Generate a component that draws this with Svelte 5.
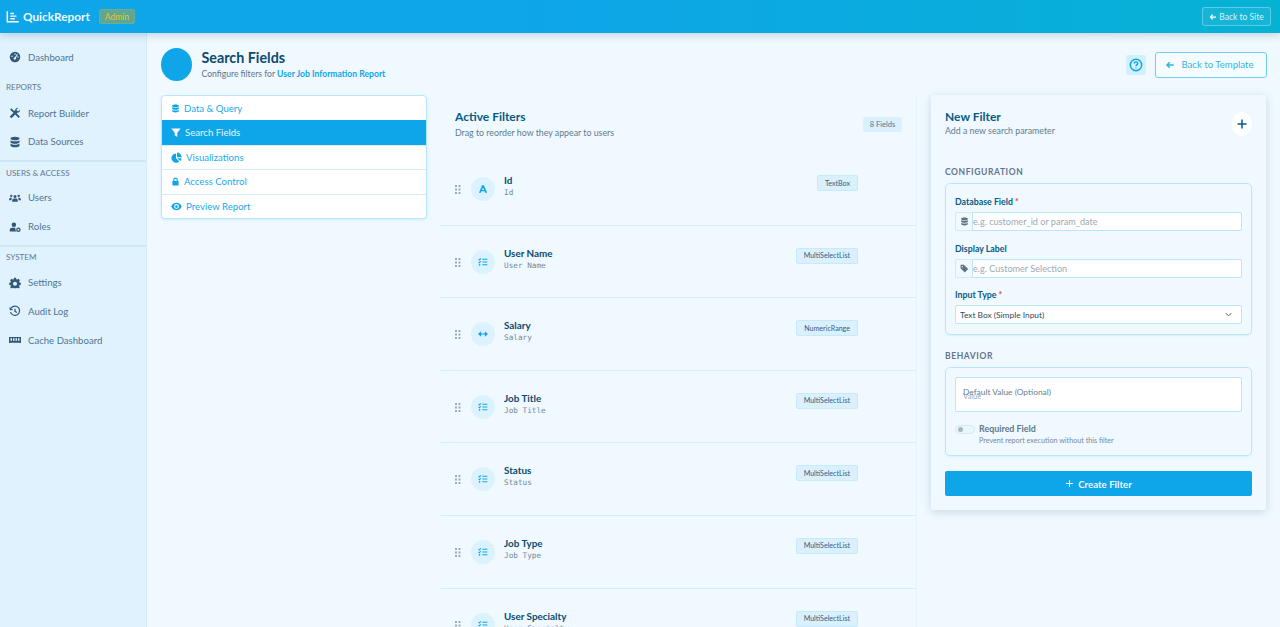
<script>
  const db = 'M8 1C4.5 1 2 2 2 3.4S4.5 5.8 8 5.8 14 4.8 14 3.4 11.500 1 8 1ZM2 5.500V7.900C2 9.300 4.500 10.300 8 10.300S14 9.300 14 7.900V5.500C12.800 6.600 10.500 7.100 8 7.100S3.200 6.600 2 5.500ZM2 10V12.500C2 13.900 4.500 15 8 15S14 13.900 14 12.500V10C12.800 11.100 10.500 11.700 8 11.700S3.200 11.100 2 10Z';
  const icons = {
    db,
    gauge: 'M8 1a7 7 0 1 0 0 14A7 7 0 0 0 8 1ZM8 3a1 1 0 1 1 0 2 1 1 0 0 1 0-2ZM4 6a1 1 0 1 1 0 2 1 1 0 0 1 0-2ZM11.800 4.700 9.300 9A1.700 1.700 0 1 1 7.900 8.200L10.500 4ZM12 7a1 1 0 1 1 0 2 1 1 0 0 1 0-2Z',
    tools: 'M1.500 3 3 1.500 7 5.300 8.500 4C8.300 2.500 9.800.8 12 1.200L10 3.200 10.500 5 12.500 5.500 14.600 3.500C15 6 13 7.700 11.500 7.300L10.300 8.500 14.500 12.700 12.700 14.500 8.300 10 3.300 15 1 12.700 6 7.800 2.600 4.600 1.500 3Z',
    users: 'M8 4a2 2 0 1 1 0 4 2 2 0 0 1 0-4ZM3 3.500a1.600 1.600 0 1 1 0 3.200 1.600 1.600 0 0 1 0-3.200ZM13 3.500a1.600 1.600 0 1 1 0 3.200 1.600 1.600 0 0 1 0-3.200ZM0 11C0 8.800.9 7.500 2.300 7.500H4.200C3.500 8.300 3.200 9.500 3.200 11ZM16 11C16 8.800 15.100 7.500 13.700 7.500H11.800C12.500 8.300 12.800 9.500 12.800 11ZM4.200 13C4.200 10 5 8.700 6.500 8.700H9.500C11 8.700 11.800 10 11.800 13Z',
    usercog: 'M6.500 2a3 3 0 1 1 0 6 3 3 0 0 1 0-6ZM1 14V12C1 10 2.500 9 4 9H8.500C8.300 11 8.800 13 10 14ZM12.500 8.500a3 3 0 1 1 0 6 3 3 0 0 1 0-6ZM12.500 10.300a1.200 1.200 0 1 0 0 2.400 1.200 1.200 0 0 0 0-2.400Z',
    cog: 'M6.700 1H9.300L9.700 2.900 11 3.400 12.700 2.400 14.500 4.300 13.500 6 14 7.300 15.800 7.700V10.200L14 10.700 13.500 12 14.500 13.600 12.700 15.300 11 14.400 9.700 14.900 9.300 15H6.700L6.300 14.900 5 14.400 3.300 15.300 1.500 13.600 2.500 12 2 10.700.2 10.200V7.700L2 7.300 2.500 6 1.500 4.300 3.300 2.400 5 3.400 6.300 2.900ZM8 6.200a2.700 2.700 0 1 0 0 5.400 2.700 2.700 0 0 0 0-5.400Z',
    tag: 'M1 2V7.500L8.500 15 14.500 9 7 1.500H1.500ZM4 3.500a1.200 1.200 0 1 1 0 2.400 1.200 1.200 0 0 1 0-2.400Z',
    mem: 'M0 4H16V9.500A1 1 0 0 0 16 10.500V12H0V10.500A1 1 0 0 0 0 9.500ZM2 5.500V9H4V5.500ZM5.300 5.500V9H7.300V5.500ZM8.700 5.500V9H10.700V5.500ZM12 5.500V9H14V5.500ZM2 10.500V11H14V10.500Z',
    filter: 'M.5 1.500H15.500L10 8.500V15L6 12.500V8.500Z',
    pie: 'M8.800 0.800A6.700 6.700 0 0 1 15.500 7.500H8.800ZM7.300 2.200V8.900L12 13.700A6.700 6.700 0 1 1 7.300 2.200ZM9.100 9H15.400A6.600 6.600 0 0 1 13.500 13.200Z',
    lock: 'M4 7V5A4 4 0 0 1 12 5V7H13.500V15H2.500V7ZM6 7H10V5A2 2 0 0 0 6 5Z',
    eye: 'M8 2.500C4.500 2.500 1.700 5 .3 8 1.700 11 4.500 13.500 8 13.500S14.300 11 15.700 8C14.300 5 11.500 2.500 8 2.500ZM8 4.500a3.500 3.500 0 1 1 0 7 3.500 3.500 0 0 1 0-7ZM8 6a2 2 0 1 0 0 4 2 2 0 0 0 0-4Z',
    a: 'M6.600 2H9.400L14.500 14H11.500L10.600 11.500H5.400L4.500 14H1.500ZM8 5.700 6.300 9.500H9.700Z'
  };
  const side = [
    { items: [['Dashboard', 'gauge']] },
    { title: 'REPORTS', items: [['Report Builder', 'tools'], ['Data Sources', 'db']] },
    { title: 'USERS & ACCESS', items: [['Users', 'users'], ['Roles', 'usercog']] },
    { title: 'SYSTEM', items: [['Settings', 'cog'], ['Audit Log', 'history'], ['Cache Dashboard', 'mem']] }
  ];
  const tabs = [
    ['Data & Query', 'db', 9], ['Search Fields', 'filter', 10], ['Visualizations', 'pie', 11], ['Access Control', 'lock', 9], ['Preview Report', 'eye', 11]
  ];
  const rows = [
    ['Id', 'TextBox', 'a'], ['User Name', 'MultiSelectList', 'list'], ['Salary', 'NumericRange', 'range'],
    ['Job Title', 'MultiSelectList', 'list'], ['Status', 'MultiSelectList', 'list'], ['Job Type', 'MultiSelectList', 'list'],
    ['User Specialty', 'MultiSelectList', 'list']
  ];
</script>

{#snippet icon(name, cls, w)}
  <svg class={cls} style={w ? `width:${w}px` : undefined} viewBox="0 0 16 16" aria-hidden="true">
    {#if name === 'list'}
      <path class="ln" d="M7 3.500H15M7 8H15M7 12.500H15" />
      <path class="ln thin" d="M1 3.500 2.300 4.800 4.500 2.300M1 8 2.300 9.300 4.500 6.800" />
      <circle cx="2.500" cy="12.500" r="1.400" />
    {:else if name === 'range'}
      <path class="ln" d="M4 8H12" />
      <path d="M0 8 5 3.500V12.500ZM16 8 11 3.500V12.500Z" />
    {:else if name === 'history'}
      <path class="ln" d="M3 3.800A6.200 6.200 0 1 1 2 9.500" />
      <path d="M.8 2.200 1 7 5.600 6.700Z" />
      <path class="ln thin" d="M8 5V8.500L10.500 10" />
    {:else}
      <path fill-rule="evenodd" d={icons[name]} />
    {/if}
  </svg>
{/snippet}

<div class="app">
  <header class="top">
    <div class="brand">
      <svg class="logo" viewBox="0 0 16 16" aria-hidden="true">
        <path d="M1.500 1.500V13.500H14.500" /><path d="M5 4H9M5 7H12M5 10H10" />
      </svg>
      <span class="name">QuickReport</span>
      <span class="admin">Admin</span>
    </div>
    <button class="site"><svg viewBox="0 0 16 16"><path d="M14 8H3M7.500 3.500 3 8 7.500 12.500" /></svg>Back to Site</button>
  </header>

  <div class="body">
    <aside class="side">
      {#each side as g, i}
        <section class="group" class:ruled={i > 1}>
          {#if g.title}<h4>{g.title}</h4>{/if}
          {#each g.items as it}
            <div class="link">{@render icon(it[1], 'sico')}<span>{it[0]}</span></div>
          {/each}
        </section>
      {/each}
    </aside>

    <main class="main">
      <div class="head">
        <div class="bubble"></div>
        <div class="htext">
          <h1>Search Fields</h1>
          <p>Configure filters for <b>User Job Information Report</b></p>
        </div>
        <div class="hactions">
          <span class="help">
            <svg viewBox="0 0 16 16"><circle cx="8" cy="8" r="6.500" /><path d="M6 6.300C6 3.800 10 3.800 10 6.300 10 7.800 8 7.800 8 9.300" /><path d="M8 11V12" /></svg>
          </span>
          <button class="tmpl"><svg viewBox="0 0 16 16"><path d="M14 8H3M7.500 3.500 3 8 7.500 12.500" /></svg>Back to Template</button>
        </div>
      </div>

      <div class="cols">
        <nav class="tabs">
          {#each tabs as t, i}
            <div class="tab" class:active={i === 1}>{@render icon(t[1], 'tico', t[2])}<span>{t[0]}</span></div>
          {/each}
        </nav>

        <section class="list">
          <div class="lhead">
            <div>
              <h2>Active Filters</h2>
              <p>Drag to reorder how they appear to users</p>
            </div>
            <span class="count">8 Fields</span>
          </div>
          {#each rows as r}
            <div class="row">
              <svg class="grip" viewBox="0 0 6 9"><path d="M0 0h2v2H0zM3.500 0h2v2h-2zM0 3.500h2v2H0zM3.500 3.500h2v2h-2zM0 7h2v2H0zM3.500 7h2v2h-2z" /></svg>
              <span class="ric">{@render icon(r[2], 'rico')}</span>
              <div class="rtext">
                <div class="rname">{r[0]}</div>
                <code>{r[0]}</code>
              </div>
              <span class="kind">{r[1]}</span>
            </div>
          {/each}
        </section>

        <aside class="panel">
          <div class="phead">
            <div>
              <h2>New Filter</h2>
              <p>Add a new search parameter</p>
            </div>
            <span class="plus"><svg viewBox="0 0 16 16"><path d="M8 2V14M2 8H14" /></svg></span>
          </div>

          <h5>CONFIGURATION</h5>
          <div class="box cfg">
            <label for="f1">Database Field <i>*</i></label>
            <div class="ig">
              <span class="addon">{@render icon('db', 'aico')}</span>
              <input id="f1" placeholder="e.g. customer_id or param_date" />
            </div>
            <label for="f2">Display Label</label>
            <div class="ig">
              <span class="addon">{@render icon('tag', 'aico')}</span>
              <input id="f2" placeholder="e.g. Customer Selection" />
            </div>
            <label for="f3">Input Type <i>*</i></label>
            <div class="sel" id="f3">
              <span>Text Box (Simple Input)</span>
              <svg viewBox="0 0 16 16"><path d="M3 5.500 8 10.500 13 5.500" /></svg>
            </div>
          </div>

          <h5 class="beh">BEHAVIOR</h5>
          <div class="box">
            <div class="float">
              <span class="ph">Value</span>
              <span class="fl">Default Value (Optional)</span>
            </div>
            <div class="req">
              <span class="sw"><span class="dot"></span></span>
              <div>
                <div class="rq">Required Field</div>
                <div class="rs">Prevent report execution without this filter</div>
              </div>
            </div>
          </div>

          <button class="create"><svg viewBox="0 0 16 16"><path d="M8 2V14M2 8H14" /></svg>Create Filter</button>
        </aside>
      </div>
    </main>
  </div>
</div>

<style>
  :global(body) { margin: 0; background: #f0f9ff; }
  * { box-sizing: border-box; }
  .app {
    width: 1280px; height: 627px; overflow: hidden; display: flex; flex-direction: column;
    font-family: Lato, "Open Sans", sans-serif; color: #0c4a6e; background: #f0f9ff;
  }
  h1, h2, h4, h5, p { margin: 0; }
  svg { display: block; flex: none; }

  .top {
    height: 33px; flex: none; display: flex; align-items: center; justify-content: space-between;
    padding: 0 9px 0 6px; background: linear-gradient(90deg, #0ea5e9 0%, #0ea5e9 40%, #06b2d4 100%);
    box-shadow: 0 2px 8px rgba(12, 74, 110, .22); position: relative; z-index: 2;
  }
  .brand { display: flex; align-items: center; }
  .logo { width: 14px; height: 14px; fill: none; stroke: #fff; stroke-width: 1.700; margin-right: 3px; }
  .name { color: #f0f9ff; font-size: 11.800px; font-weight: 700; }
  .admin {
    margin-left: 9px; width: 36px; height: 15px; display: flex; align-items: center; justify-content: center;
    font-size: 8.500px; color: #eec11a; background: rgba(120, 170, 120, .75); border: 1px solid #6fae8a; border-radius: 2px;
  }
  .site {
    width: 69px; height: 19px; padding: 0; display: flex; align-items: center; justify-content: center; gap: 2px;
    font: 8.500px Lato, sans-serif; color: #d8f4fb; background: rgba(255,255,255,.06);
    border: 1px solid rgba(255,255,255,.3); border-radius: 3px;
  }
  .site svg { width: 8px; height: 8px; fill: none; stroke: #fff; stroke-width: 2.500; }

  .body { flex: 1; display: flex; min-height: 0; }
  .side { width: 147px; flex: none; background: #e0f2fe; border-right: 1px solid #d3ebfa; padding-top: 10px; }
  .group { padding-bottom: 4px; }
  .group:first-child { padding-bottom: 0; }
  .group.ruled { border-top: 2px solid #cfe6f5; }
  .group h4 { font-size: 8.100px; font-weight: 400; color: #64788f; padding: 0 6px; line-height: 11px; margin: 10px 0 6px; }
  .group.ruled h4 { margin: 5.500px 0 5px; }
  .link {
    height: 28.700px; display: flex; align-items: center; padding-left: 9px; gap: 7px;
    font-size: 9.600px; color: #4f7593;
  }
  .sico { width: 12px; height: 12px; fill: #33587a; stroke: #33587a; }
  .sico :global(.ln) { fill: none; stroke-width: 1.700; }
  .sico :global(path:not(.ln)) { stroke: none; }

  .main { flex: 1; min-width: 0; padding: 15px 13px 0 14px; }
  .head { display: flex; align-items: center; height: 33px; margin-bottom: 14px; }
  .bubble { width: 31px; height: 33px; border-radius: 50%; background: #0ea5e9; }
  .htext { margin-left: 9.500px; flex: 1; }
  h1 { font-size: 14.300px; font-weight: 700; line-height: 18px; color: #0c4a6e; margin-top: 1px; }
  .htext p { font-size: 8.600px; line-height: 14px; color: #5d7488; }
  .htext b { font-weight: 700; color: #0ea5e9; }
  .hactions { display: flex; align-items: center; gap: 9px; }
  .help { width: 20px; height: 20px; display: grid; place-items: center; background: #d2f1fd; border-radius: 2px; }
  .help svg { width: 14px; height: 14px; fill: none; stroke: #0ea5e9; stroke-width: 1.700; }
  .tmpl {
    width: 112px; height: 26px; padding: 0 3px 0 0; display: flex; align-items: center; justify-content: center; gap: 6px;
    font: 9.600px Lato, sans-serif; color: #35b7dc; background: #f4fcff; border: 1.500px solid #6dd0ec; border-radius: 3px;
  }
  .tmpl svg { width: 10px; height: 10px; fill: none; stroke: #2bb3db; stroke-width: 2.200; }

  .cols { display: flex; align-items: flex-start; }
  .tabs {
    width: 266px; flex: none; background: #fff; border: 1px solid #bae6fd; border-radius: 4px; overflow: hidden;
    box-shadow: 0 1px 3px rgba(14,165,233,.15);
  }
  .tab {
    height: 24.400px; display: flex; align-items: center; gap: 4px; padding-left: 9px; font-size: 9.600px;
    color: #22a9ec; border-top: 1px solid #d5eef9;
  }
  .tab:first-child { border-top: 0; }
  .tab.active { background: #0ea5e9; color: #e6f7ff; border-top: 0; }
  .tico { height: 11px; fill: #0ea5e9; }
  .active .tico { fill: #fff; }

  .list { width: 477px; flex: none; margin-left: 13px; background: #f0f9ff; border-right: 1px solid #e6f4fc; }
  .lhead { display: flex; justify-content: space-between; padding: 13px 14px 0 15px; height: 58px; }
  h2 { font-size: 12px; font-weight: 700; line-height: 17px; color: #075985; }
  .lhead h2 { margin-bottom: 1px; }
  .lhead p { font-size: 8.800px; line-height: 13px; color: #607a90; }
  .count {
    width: 39px; height: 15px; margin-top: 9px; display: flex; align-items: center; justify-content: center;
    font-size: 7.500px; color: #4f7593; background: #d8f1fd; border-radius: 2px;
  }
  .row {
    height: 72.600px; display: flex; align-items: flex-start; padding: 24px 58px 0 15px;
    border-bottom: 1px solid #d3eefc;
  }
  .grip { width: 6px; height: 9px; margin-top: 8px; fill: #9aaab8; }
  .ric { width: 24px; height: 24px; margin-left: 10px; margin-right: 9px; border-radius: 50%; background: #dcf2fe; display: grid; place-items: center; }
  .rico { width: 10px; height: 10px; fill: #0ea5e9; stroke: #0ea5e9; }
  .rico :global(.ln) { fill: none; stroke-width: 1.700; }
  .rico :global(path:not(.ln)), .rico :global(circle) { stroke: none; }
  .rtext { flex: 1; margin-top: -3px; }
  .rname { font-size: 9.900px; font-weight: 700; line-height: 12px; color: #0c4a6e; }
  code { display: block; margin-top: 1px; font: 7.700px/12px "DejaVu Sans Mono", monospace; color: #75889a; }
  .kind {
    height: 16px; padding: 0 7px; margin-top: -2px; display: flex; align-items: center; font-size: 7.100px; color: #33607f;
    background: #daf1fd; border: 1px solid #c7eafb; border-radius: 2px;
  }

  .panel {
    width: 335px; flex: none; margin-left: 14px; padding: 15px 14px 14px; background: #f0f9ff;
    box-shadow: 0 2px 10px rgba(12, 74, 110, .18); border-radius: 2px;
  }
  .phead { display: flex; justify-content: space-between; height: 56px; }
  .panel h2 { line-height: 14px; }
  .phead p { font-size: 8.800px; line-height: 13px; color: #607a90; }
  .plus { width: 20px; height: 24px; margin-top: 2px; border-radius: 50%; background: #fff; display: grid; place-items: center; }
  .plus svg { width: 12px; height: 12px; fill: none; stroke: #075985; stroke-width: 2; }
  h5 { font-size: 8.500px; font-weight: 700; letter-spacing: .6px; line-height: 13px; color: #64748b; margin-bottom: 4px; }
  .beh { margin-top: 15px; }
  .box { width: 307px; border: 1px solid #bae6fd; border-radius: 5px; padding: 9px 9px 9px; box-shadow: 0 1px 2px rgba(14,165,233,.1); }
  .cfg { padding-top: 12px; padding-bottom: 10px; }
  label { display: block; font-size: 8.800px; font-weight: 700; line-height: 12px; color: #075985; margin: 0 0 4px; }
  i { color: #ef4444; font-style: normal; }
  .ig { display: flex; height: 19px; margin-bottom: 11.500px; }
  .addon { width: 17px; display: grid; place-items: center; background: #f2f9fd; border: 1px solid #cdebfb; border-right: 0; border-radius: 2px 0 0 2px; }
  .aico { width: 9px; height: 9px; fill: #5d7488; }
  input {
    flex: 1; min-width: 0; padding: 0; background: #fff; border: 1px solid #bae6fd; border-radius: 0 2px 2px 0;
    font: 9.100px Lato, sans-serif; outline: 0;
  }
  input::placeholder { color: #9ca9b5; opacity: 1; }
  .sel {
    height: 19px; display: flex; align-items: center; justify-content: space-between; padding: 0 8px 0 4px; background: #fff;
    border: 1px solid #bae6fd; border-radius: 2px; font-size: 8.400px; color: #2f4a60;
  }
  .sel svg { width: 9px; height: 9px; fill: none; stroke: #40566a; stroke-width: 1.600; }
  .float { position: relative; height: 35px; background: #fff; border: 1px solid #bae6fd; border-radius: 2px; }
  .fl, .ph { position: absolute; left: 7px; line-height: 12px; }
  .fl { top: 8px; font-size: 8.400px; color: #667f92; }
  .ph { top: 13px; font-size: 7.500px; color: #a0adb9; }
  .req { display: flex; gap: 4px; margin-top: 11px; }
  .sw { width: 20px; height: 9px; margin-top: 2px; flex: none; border: 1px solid #cfeafb; border-radius: 5px; background: #e9f6fd; position: relative; }
  .dot { position: absolute; left: 2px; top: 1px; width: 5px; height: 5px; border-radius: 50%; background: #aeb6bd; }
  .rq { font-size: 8.900px; font-weight: 700; line-height: 12px; color: #62788c; }
  .rs { font-size: 7.200px; line-height: 11px; color: #768a9b; margin-top: 0; }
  .create {
    width: 307px; height: 25px; margin-top: 15px; display: flex; align-items: center; justify-content: center; gap: 4px; padding: 0;
    background: #0ea5e9; color: #f0f9ff; border: 0; border-radius: 2px; font: 700 9.700px Lato, sans-serif;
  }
  .create svg { width: 9px; height: 9px; fill: none; stroke: #fff; stroke-width: 1.800; }
</style>
